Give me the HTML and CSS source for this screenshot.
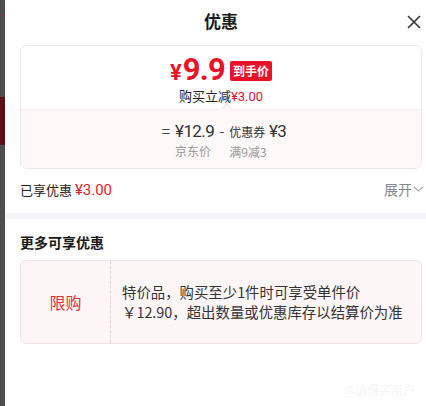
FILE: index.html
```html
<!DOCTYPE html>
<html lang="zh">
<head>
<meta charset="utf-8">
<link rel="stylesheet" href="styles.css">
</head>
<body>
<div class="page">
  <div class="backdrop">
    <div class="bd-line"></div>
    <div class="bd-red"></div>
  </div>
  <div class="panel">
    <div class="header">
      <div class="title">优惠</div>
      <svg class="close" width="14" height="14" viewBox="0 0 14 14"><path d="M1 1L13 13M13 1L1 13" stroke="#333" stroke-width="1.6" fill="none"/></svg>
    </div>
    <div class="card">
      <div class="card-top">
        <div class="final">
          <span class="yen">¥</span><span class="big">9.9</span><span class="badge">到手价</span>
        </div>
        <div class="reduce">购买立减<span class="red">¥3.00</span></div>
      </div>
      <div class="card-bottom">
        <div class="notch"></div>
        <div class="formula">
          <span class="op">=</span>
          <div class="term"><div class="val">¥12.9</div><div class="lbl">京东价</div></div>
          <span class="op">-</span>
          <div class="term"><div class="val"><span class="small">优惠券</span> ¥3</div><div class="lbl">满9减3</div></div>
        </div>
      </div>
    </div>
    <div class="enjoy">
      <div>已享优惠 <span class="red2">¥3.00</span></div>
      <div class="expand">展开<svg width="11" height="8" viewBox="0 0 11 8"><path d="M1 2L5.5 6L10 2" stroke="#aaa" stroke-width="1.2" fill="none"/></svg></div>
    </div>
    <div class="sep"></div>
    <div class="more-title">更多可享优惠</div>
    <div class="offer">
      <div class="offer-tag">限购</div>
      <div class="offer-text">特价品，购买至少1件时可享受单件价<br>￥12.90，超出数量或优惠库存以结算价为准</div>
    </div>
    <div class="watermark">@值得买用户</div>
  </div>
</div>
</body>
</html>
```
FILE: styles.css
```css
html, body {
  margin: 0;
  padding: 0;
}
body {
  width: 426px;
  height: 406px;
  overflow: hidden;
  font-family: "Noto Sans CJK SC", "Noto Sans", sans-serif;
  color: #222;
  background: #fff;
}
.page {
  display: flex;
  height: 406px;
}
.backdrop {
  width: 5px;
  flex: none;
  background: #4d4d4d;
  display: flex;
  flex-direction: column;
}
.bd-line {
  height: 1px;
  margin-top: 15px;
  background: #7a3a3e;
}
.bd-red {
  height: 48px;
  margin-top: 81px;
  background: #5a1015;
}
.panel {
  flex: 1;
  position: relative;
  padding: 0 4px 0 15px;
  display: flex;
  flex-direction: column;
}
.header {
  height: 45px;
  display: flex;
  align-items: center;
  justify-content: center;
  position: relative;
}
.title {
  font-size: 17px;
  font-weight: 700;
  color: #1a1a1a;
  margin-top: -4px;
}
.close {
  position: absolute;
  right: 1px;
  top: 15px;
}
.card {
  border: 1px solid #efe6e8;
  border-radius: 7px;
  overflow: hidden;
}
.card-top {
  height: 63px;
  display: flex;
  flex-direction: column;
  align-items: center;
  background: #fff;
}
.final {
  display: flex;
  align-items: baseline;
  color: #e8132b;
  margin-top: 7px;
  height: 34px;
  line-height: 34px;
}
.yen {
  font-family: "Roboto", sans-serif;
  font-size: 22px;
  font-weight: 700;
}
.big {
  font-family: "Roboto", sans-serif;
  font-size: 31px;
  font-weight: 700;
  margin-left: 1px;
  letter-spacing: -0.8px;
}
.badge {
  align-self: center;
  margin-left: 5px;
  margin-top: 2px;
  background: #e8132b;
  color: #fff;
  font-size: 12px;
  font-weight: 700;
  padding: 0 3px;
  height: 20px;
  line-height: 20px;
  border-radius: 2px;
}
.reduce {
  font-size: 13px;
  line-height: 18px;
  color: #222;
}
.red {
  color: #e8132b;
  font-family: "Roboto", sans-serif;
}
.card-bottom {
  position: relative;
  height: 58px;
  background: #fef8f8;
  border-top: 1px solid #f9e9ea;
  display: flex;
  justify-content: center;
}
.notch {
  position: absolute;
  left: 202px;
  top: -5px;
  width: 7px;
  height: 7px;
  background: #fef8f8;
  border-left: 1px solid #f3e3e5;
  border-top: 1px solid #f3e3e5;
  transform: rotate(45deg);
}
.formula {
  display: flex;
  align-items: flex-start;
  gap: 5px;
  margin-top: 10px;
  margin-left: 6px;
  color: #333;
}
.op {
  font-size: 15px;
  line-height: 22px;
  color: #444;
}
.term {
  display: flex;
  flex-direction: column;
}
.val {
  font-family: "Roboto", "Noto Sans CJK SC", sans-serif;
  font-size: 17px;
  line-height: 22px;
  letter-spacing: -0.6px;
  color: #333;
}
.small {
  font-family: "Noto Sans CJK SC", sans-serif;
  font-size: 12px;
  letter-spacing: 0;
}
.lbl {
  font-size: 12px;
  line-height: 18px;
  color: #999;
}
.enjoy {
  height: 44px;
  display: flex;
  align-items: center;
  justify-content: space-between;
  font-size: 13px;
  color: #222;
  margin-top: -2px;
}
.red2 {
  color: #e4202e;
  font-family: "Roboto", sans-serif;
  font-size: 15px;
}
.expand {
  color: #888;
  font-size: 14px;
  display: flex;
  align-items: center;
  gap: 1px;
  margin-right: -2px;
}
.sep {
  height: 6px;
  background: #f5f6fa;
  margin: 2px -4px 0 -15px;
}
.more-title {
  font-size: 14px;
  font-weight: 700;
  color: #1a1a1a;
  height: 36px;
  line-height: 36px;
  margin-top: 5px;
}
.offer {
  height: 82px;
  display: flex;
  background: #fdf5f6;
  border: 1px solid #f1e1e4;
  border-radius: 6px;
}
.offer-tag {
  width: 89px;
  flex: none;
  display: flex;
  align-items: center;
  justify-content: center;
  font-size: 16px;
  color: #e0303c;
  border-right: 1px dashed #e6d2d6;
}
.offer-text {
  display: flex;
  align-items: center;
  padding-left: 11px;
  font-size: 14.4px;
  line-height: 20px;
  color: #333;
}
.watermark {
  position: absolute;
  right: 11px;
  bottom: 8px;
  font-size: 12px;
  color: #f6f6f6;
}
```
